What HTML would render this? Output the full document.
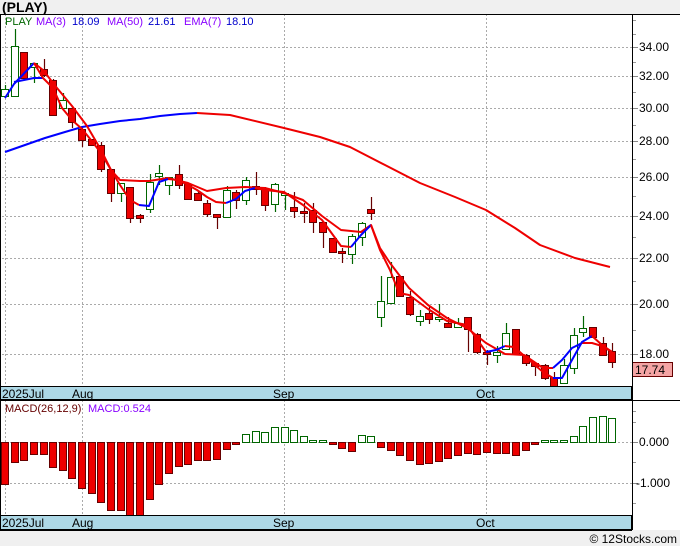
<!DOCTYPE html>
<html><head><meta charset="utf-8"><style>
html,body{margin:0;padding:0;background:#f0f0f0;}
body{width:680px;height:546px;overflow:hidden;font-family:"Liberation Sans",sans-serif;}
svg{display:block}
</style></head><body>
<svg id="s" width="680" height="546" xmlns="http://www.w3.org/2000/svg" font-family="Liberation Sans, sans-serif">
<rect x="0" y="0" width="680" height="546" fill="#f0f0f0"/>
<text x="2" y="12" font-size="14" font-weight="bold" fill="#000">(PLAY)</text>
<rect x="0" y="14" width="680" height="516" fill="#fff"/>
<g id="g"></g>
</svg>
<script>
var g=document.getElementById('g'),h='';
function L(x1,y1,x2,y2,c,w,d){h+='<line x1="'+x1+'" y1="'+y1+'" x2="'+x2+'" y2="'+y2+'" stroke="'+c+'" stroke-width="'+(w||1)+'"'+(d?' stroke-dasharray="'+d+'"':'')+'/>';}
function R(x,y,w,hh,f,s){h+='<rect x="'+x+'" y="'+y+'" width="'+w+'" height="'+hh+'" fill="'+f+'" stroke="'+s+'" stroke-width="1"/>';}
function T(x,y,t,c,s,a){h+='<text x="'+x+'" y="'+y+'" font-size="'+(s||11)+'" fill="'+c+'"'+(a?' text-anchor="'+a+'"':'')+'>'+t+'</text>';}
function P(pts,c,w){h+='<polyline fill="none" stroke="'+c+'" stroke-width="'+(w||2)+'" stroke-linejoin="round" points="'+pts+'"/>';}
var pl=[[47,'34.00'],[76,'32.00'],[108,'30.00'],[141,'28.00'],[177,'26.00'],[216,'24.00'],[258,'22.00'],[304,'20.00'],[354,'18.00']];
pl.forEach(function(p){L(2,p[0]+.5,632,p[0]+.5,'#aaa',1,'2,2');L(632,p[0]+.5,638,p[0]+.5,'#888');T(639,p[0]+4,p[1],'#000',12);});
[[20],[34],[62],[92],[125],[159],[196],[237],[281],[330]].forEach(function(p){L(632,p[0]+.5,636,p[0]+.5,'#999');});
[5.5,82.5,284.5,486.5].forEach(function(x){L(x,14,x,386,'#aaa',1,'2,2');L(x,400,x,515,'#aaa',1,'2,2');});
L(2,442.5,632,442.5,'#aaa',1,'2,2');L(2,483.5,632,483.5,'#aaa',1,'2,2');
L(632,442.5,638,442.5,'#888');L(632,483.5,638,483.5,'#888');
[411,422,462,503].forEach(function(y){L(632,y+.5,636,y+.5,'#999');});
T(639,446,'0.000','#000',12);T(636,487,'-1.000','#000',12);
var c=[[96,89,85,96],[96,46,29,96],[52,78,52,78],[67,63,63,83],[69,75,59,77],[80,115,79,115],[108,100,93,110],[108,122,106,128],[129,140,127,147],[139,145,139,145],[145,169,142,172],[169,193,169,202],[193,183,183,202],[187,218,187,223],[215,218,214,223],[209,182,174,213],[176,173,165,185],[185,177,177,195],[174,185,165,189],[184,199,183,200],[193,200,192,201],[203,214,200,217],[214,217,214,229],[217,190,186,217],[192,200,190,209],[200,180,177,205],[186,189,172,195],[189,205,187,211],[204,184,183,212],[195,193,193,210],[207,211,192,218],[211,213,203,223],[210,222,203,233],[222,232,221,248],[238,252,238,253],[251,253,248,263],[254,236,234,264],[237,223,222,246],[209,213,197,220],[317,301,276,327],[303,277,262,303],[276,296,276,297],[297,314,291,316],[321,316,310,326],[313,319,306,324],[319,317,304,322],[323,327,317,328],[327,323,318,328],[317,329,317,352],[334,352,333,354],[352,354,350,365],[355,352,346,363],[349,333,323,350],[329,354,329,355],[355,363,354,366],[363,366,362,376],[365,378,364,380],[377,387,372,390],[383,365,359,384],[368,335,328,374],[332,328,316,337],[327,337,327,338],[343,355,337,356],[351,362,343,368]];
c.forEach(function(k,i){var x=Math.round(5+i*9.64);var up=k[1]<k[0];var col=up?'#060':'#600';
L(x+.5,k[2],x+.5,k[3],col,1.2);var t=Math.min(k[0],k[1]),b=Math.max(k[0],k[1]);if(b-t<2)b=t+2;
R(x-3.5,t+.5,7,b-t,up?'#fff':'#e00',up?'#060':'#600');});
P('5,152 25,145 45,138 65,132 82,127 100,124 120,121 140,119 160,116 180,114 197,113','#00f');
P('197,113 230,115 284,128 320,137 350,147 385,165 420,183 455,197 486,210 515,228 540,245 575,258 610,267','#e00');
P('34,63 43,70 57,88 72,106 87,126 101,150 111,170 120,180 140,181 149,181 168,178 188,183 207,191 226,188 245,187 265,188 284,193 303,200 322,216 341,230 361,232 371,225 380,248 390,263 409,288 428,305 447,318 467,328 486,343 505,354 524,355 543,368 553,368','#e00');
P('14,82 24,80 34,78 43,78','#00f');
P('553,368 562,360 572,348 582,343','#00f');P('582,343 592,343 602,346 612,352','#e00');
P('5,98 14,84 34,63','#00f');
P('34,63 43,78 53,88 62,108 72,120 82,129 91,140 101,153 111,170 120,185 130,200 139,205','#e00');
P('139,205 149,206 159,182 168,179','#00f');
P('168,179 178,180 188,185 197,190 207,197 216,202 226,203','#e00');
P('226,203 236,199 245,191 255,188','#00f');
P('255,188 265,190 284,192 303,205 322,220 341,246 351,247','#e00');
P('351,247 361,235 371,225','#00f');
P('371,225 380,250 390,270 399,293 409,295 428,309 447,321 467,325 486,352','#e00');
P('486,352 496,350 505,346','#00f');P('505,346 514,347 543,372 553,378','#e00');
P('553,378 562,378 572,360 582,342 592,336','#00f');P('592,336 602,345 612,352','#e00');
T(5,25,'PLAY','#060',11);T(36,25,'MA(3)','#80f',11);T(72,25,'18.09','#00c',11);T(107,25,'MA(50)','#80f',11);T(148,25,'21.61','#00c',11);T(184,25,'EMA(7)','#80f',11);T(226,25,'18.10','#00c',11);
R(632.5,362.5,40,14,'#f4a4a4','#600');T(635,374,'17.74','#000',12);
var m=[484,462,460,454,454,467,470,478,488,493,502,510,510,515,515,499,484,473,466,464,460,460,459,449,444,434,431,432,427,427,430,436,440,441,444,448,451,435,436,447,450,455,460,464,463,461,458,455,453,454,452,453,453,455,450,443,441,441,441,436,426,417,416,418,420];
m.forEach(function(v,i){if(i>63)return;var x=Math.round(5+i*9.64);var z=442;var up=v<z;var t=Math.min(v,z),b=Math.max(v,z);if(b-t<2){if(up)t=b-2;else b=t+2;}
R(x-3.5,t+.5,7,b-t,up?'#fff':'#e00',up?'#060':'#600');});
T(5,412,'MACD(26,12,9)','#600',11);T(88,412,'MACD:0.524','#80f',11);
R(0.5,386.5,631,13,'#add8e6','#000');R(0.5,515.5,631,14,'#add8e6','#000');
[[2,'2025Jul'],[72,'Aug'],[273,'Sep'],[476,'Oct']].forEach(function(d){T(d[0],398,d[1],'#000',12);T(d[0],527,d[1],'#000',12);});
L(0.5,14,0.5,530,'#000');L(632.5,14,632.5,530,'#000');L(0,14.5,680,14.5,'#000');L(0,400.5,680,400.5,'#000');L(0,530.5,632,530.5,'#000');
T(677,543,'© 12Stocks.com','#000',12,'end');
g.innerHTML=h;
</script>
</body></html>
